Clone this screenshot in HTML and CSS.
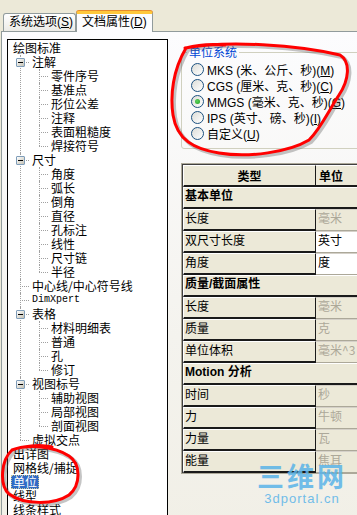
FILE: index.html
```html
<!DOCTYPE html>
<html lang="zh-CN">
<head>
  <meta charset="UTF-8">
  <title>文档属性 - 单位</title>
  <link rel="stylesheet" href="styles.css">
</head>
<body>
  <div class="window">
    <div class="tabs">
      <div class="tab">系统选项(<u>S</u>)</div>
      <div class="tab active">文档属性(<u>D</u>)</div>
    </div>

    <div class="page">
      <div class="tree">
        <ul class="root">
          <li><span class="label">绘图标准</span>
            <ul class="kids">
              <li><span class="toggle"></span><span class="label">注解</span>
                <ul class="kids">
                  <li><span class="label">零件序号</span></li>
                  <li><span class="label">基准点</span></li>
                  <li><span class="label">形位公差</span></li>
                  <li><span class="label">注释</span></li>
                  <li><span class="label">表面粗糙度</span></li>
                  <li><span class="label">焊接符号</span></li>
                </ul>
              </li>
              <li><span class="toggle"></span><span class="label">尺寸</span>
                <ul class="kids">
                  <li><span class="label">角度</span></li>
                  <li><span class="label">弧长</span></li>
                  <li><span class="label">倒角</span></li>
                  <li><span class="label">直径</span></li>
                  <li><span class="label">孔标注</span></li>
                  <li><span class="label">线性</span></li>
                  <li><span class="label">尺寸链</span></li>
                  <li><span class="label">半径</span></li>
                </ul>
              </li>
              <li><span class="label">中心线/中心符号线</span></li>
              <li><span class="label mono">DimXpert</span></li>
              <li><span class="toggle"></span><span class="label">表格</span>
                <ul class="kids">
                  <li><span class="label">材料明细表</span></li>
                  <li><span class="label">普通</span></li>
                  <li><span class="label">孔</span></li>
                  <li><span class="label">修订</span></li>
                </ul>
              </li>
              <li><span class="toggle"></span><span class="label">视图标号</span>
                <ul class="kids">
                  <li><span class="label">辅助视图</span></li>
                  <li><span class="label">局部视图</span></li>
                  <li><span class="label">剖面视图</span></li>
                </ul>
              </li>
              <li><span class="label">虚拟交点</span></li>
            </ul>
          </li>
          <li><span class="label">出详图</span></li>
          <li><span class="label">网格线/捕捉</span></li>
          <li><span class="label selected">单位</span></li>
          <li><span class="label">线型</span></li>
          <li><span class="label">线条样式</span></li>
        </ul>
      </div>

      <div class="settings">
        <fieldset class="unit-system">
          <legend>单位系统</legend>
          <label class="radio"><span class="dot"></span><span>MKS (米、公斤、秒)(<u>M</u>)</span></label>
          <label class="radio"><span class="dot"></span><span>CGS (厘米、克、秒)(<u>C</u>)</span></label>
          <label class="radio"><span class="dot checked"></span><span>MMGS (毫米、克、秒)(<u>G</u>)</span></label>
          <label class="radio"><span class="dot"></span><span>IPS (英寸、磅、秒)(<u>I</u>)</span></label>
          <label class="radio"><span class="dot"></span><span>自定义(<u>U</u>)</span></label>
        </fieldset>

        <div class="grid-wrap">
          <table class="unit-table">
            <colgroup>
              <col class="col-type">
              <col>
            </colgroup>
            <tr>
              <th class="head-type">类型</th>
              <th class="head-unit">单位</th>
            </tr>
            <tr><td class="section" colspan="2">基本单位</td></tr>
            <tr><td class="name">长度</td><td class="value off">毫米</td></tr>
            <tr><td class="name">双尺寸长度</td><td class="value">英寸</td></tr>
            <tr><td class="name">角度</td><td class="value">度</td></tr>
            <tr><td class="section" colspan="2">质量/截面属性</td></tr>
            <tr><td class="name">长度</td><td class="value off">毫米</td></tr>
            <tr><td class="name">质量</td><td class="value off">克</td></tr>
            <tr><td class="name">单位体积</td><td class="value off">毫米^3</td></tr>
            <tr><td class="section" colspan="2">Motion 分析</td></tr>
            <tr><td class="name">时间</td><td class="value off">秒</td></tr>
            <tr><td class="name">力</td><td class="value off">牛顿</td></tr>
            <tr><td class="name">力量</td><td class="value off">瓦</td></tr>
            <tr><td class="name">能量</td><td class="value off">焦耳</td></tr>
          </table>
        </div>
      </div>
    </div>

    <div class="watermark">
      <div class="wm-big">三维网</div>
      <div class="wm-small">3dportal.cn</div>
    </div>

    <!-- hand drawn red marks on top of the screenshot -->
    <svg class="marks" width="357" height="515" viewBox="0 0 357 515">
      <g class="shadow">
        <path d="M187 50 C 230 42, 300 47, 342 57 C 353 64, 351 82, 341 97 C 331 112, 323 130, 311 142 C 291 154, 251 160, 221 155 C 196 151, 179 142, 175 117 C 172 97, 175 72, 188 50"/>
        <path d="M14 452 C 31 446, 56 448, 71 458 C 83 466, 83 487, 71 497 C 56 507, 26 507, 11 496 C 1 487, 3 462, 14 452"/>
      </g>
      <g class="ink">
        <path d="M185 48 C 228 40, 298 45, 340 55 C 351 62, 349 80, 339 95 C 329 110, 321 128, 309 140 C 289 152, 249 158, 219 153 C 194 149, 177 140, 173 115 C 170 95, 173 70, 186 48 C 200 44, 215 44, 225 45"/>
        <path d="M12 450 C 29 444, 54 446, 69 456 C 81 464, 81 485, 69 495 C 54 505, 24 505, 9 494 C -1 485, 1 460, 12 450 C 22 446, 40 444, 52 447"/>
      </g>
    </svg>
  </div>
</body>
</html>
```

FILE: styles.css
```css
html, body {
  margin: 0;
  overflow: hidden;
}

body {
  background-color: #ece9d8;
  font-family: "Liberation Sans", "Noto Sans CJK SC", sans-serif;
  font-size: 12px;
  color: #000;
}

.window {
  position: relative;
  width: 357px;
  height: 515px;
  overflow: hidden;
}

/* tab strip */
.tabs {
  display: flex;
  align-items: flex-end;
  height: 31px;
  padding-left: 3px;
}

.tab {
  box-sizing: border-box;
  width: 73px;
  height: 18px;
  padding-left: 5px;
  line-height: 17px;
  white-space: nowrap;
  border: 1px solid #919b9c;
  border-bottom: none;
  border-radius: 3px 3px 0 0;
  background: linear-gradient(#ffffff, #ecebe6);
}

.tab.active {
  position: relative;
  z-index: 1;
  width: 77px;
  height: 21px;
  margin-bottom: -1px;
  line-height: 17px;
  border-top: 3px solid #ffc83c;
  box-shadow: 0 -1px 0 #e68b2c;
  background: #fcfcfe;
}

/* tab page */
.page {
  display: flex;
  align-items: flex-start;
  height: 500px;
  margin-left: 1px;
  padding: 7px 0 0 5px;
  border-top: 1px solid #919b9c;
  border-left: 1px solid #919b9c;
  background: linear-gradient(#fcfcfe, #f4f3ee 60%, #f1efe6);
}

/* tree view */
.tree {
  flex: none;
  width: 159px;
  height: 490px;
  padding-top: 1px;
  border: 1px solid #000;
  background-color: #fff;
  font-family: "Noto Sans CJK SC", sans-serif;
  line-height: 14px;
}

.tree ul {
  list-style: none;
  margin: 0;
  padding: 0;
}

.root > li {
  padding-left: 3px;
}

.kids {
  padding-left: 19px !important;
}

.kids > li {
  position: relative;
}

.kids > li::before {
  content: "";
  position: absolute;
  left: -10px;
  top: 0;
  bottom: 0;
  border-left: 1px dotted #a0a0a0;
}

.kids > li:last-child::before {
  bottom: auto;
  height: 7px;
}

.kids > li::after {
  content: "";
  position: absolute;
  left: -10px;
  top: 7px;
  width: 9px;
  border-top: 1px dotted #a0a0a0;
}

.label {
  display: inline-block;
  height: 14px;
  padding: 0 2px;
  white-space: nowrap;
  vertical-align: top;
}

.label.mono {
  font-family: "Liberation Mono", monospace;
  font-size: 10px;
}

.label.selected {
  background-color: #316ac5;
  color: #fff;
  outline: 1px dotted #c8c8a0;
  outline-offset: -1px;
}

.toggle {
  position: absolute;
  z-index: 1;
  left: -14px;
  top: 3px;
  width: 7px;
  height: 7px;
  border: 1px solid #7f9db9;
  border-radius: 1px;
  background: linear-gradient(135deg, #ffffff, #c4c1b4);
}

.toggle::after {
  content: "";
  position: absolute;
  left: 1px;
  top: 3px;
  width: 5px;
  height: 1px;
  background-color: #000;
}

/* right side */
.settings {
  flex: none;
  width: 240px;
  margin: 6px 0 0 13px;
}

.unit-system {
  margin: 0;
  padding: 2px 0 7px 9px;
  border: 1px solid #d0d0bf;
  border-radius: 3px;
}

.unit-system legend {
  margin-left: -4px;
  padding: 0 2px;
  line-height: 14px;
  color: #0046d5;
  font-family: "Noto Sans CJK SC", sans-serif;
}

.radio {
  display: flex;
  align-items: center;
  gap: 3px;
  height: 16px;
  white-space: nowrap;
}

.dot {
  position: relative;
  flex: none;
  width: 11px;
  height: 11px;
  border: 1px solid #1c5180;
  border-radius: 50%;
  background: linear-gradient(135deg, #dcdcd7, #ffffff);
}

.dot.checked::after {
  content: "";
  position: absolute;
  left: 3px;
  top: 3px;
  width: 5px;
  height: 5px;
  border-radius: 50%;
  background: radial-gradient(circle at 40% 40%, #5ed35e, #21a121);
}

/* unit grid */
.grid-wrap {
  margin-top: 14px;
  border: 1px solid #aca899;
  border-right: none;
}

.unit-table {
  width: 100%;
  table-layout: fixed;
  border-spacing: 0;
  border-top: 1px solid #404040;
  border-left: 1px solid #404040;
  font-family: "Noto Sans CJK SC", sans-serif;
  font-size: 12px;
  line-height: 14px;
}

.col-type {
  width: 133px;
}

.unit-table th,
.unit-table td {
  padding: 1px 1px 4px 1px;
  vertical-align: top;
  white-space: nowrap;
  overflow: hidden;
  background-color: #ece9d8;
  border-top: 1px solid #fff;
  border-bottom: 2px solid #1a1a1a;
}

.unit-table th {
  padding-top: 3px;
  padding-bottom: 2px;
  font-weight: bold;
}

.head-type {
  text-align: center;
  border-left: 1px solid #fff;
  border-right: 1px solid #1a1a1a;
}

.head-unit {
  text-align: left;
  padding-left: 3px !important;
}

.unit-table td.section {
  font-weight: bold;
  font-family: "Liberation Sans", "Noto Sans CJK SC", sans-serif;
  border-left: 1px solid #fff;
}

.unit-table td.name {
  padding-left: 1px;
  border-left: 1px solid #fff;
  border-right: 1px solid #1a1a1a;
}

.unit-table td.value {
  padding-left: 2px;
  background-color: #fff;
  border-top: 1px solid #d4d0c8;
  border-bottom: 1px solid #aca899;
  padding-bottom: 5px;
}

.unit-table td.value.off {
  background-color: #ece9d8;
  color: #aca899;
}

/* site watermark */
.watermark {
  position: absolute;
  left: 257px;
  top: 461px;
  color: #5ab4e8;
  text-align: center;
  opacity: 0.85;
}

.wm-big {
  font-family: "Noto Sans CJK SC", sans-serif;
  font-size: 27px;
  font-weight: bold;
  line-height: 30px;
  letter-spacing: 3px;
}

.wm-small {
  font-family: "Liberation Sans", sans-serif;
  font-size: 13px;
  line-height: 15px;
  letter-spacing: 1px;
}

/* red annotation */
.marks {
  position: absolute;
  left: 0;
  top: 0;
  pointer-events: none;
}

.marks path {
  fill: none;
  stroke-linecap: round;
  stroke-linejoin: round;
}

.marks .shadow path {
  stroke: rgba(90, 90, 90, 0.35);
  stroke-width: 4;
}

.marks .ink path {
  stroke: #f00;
  stroke-width: 3;
}
```
